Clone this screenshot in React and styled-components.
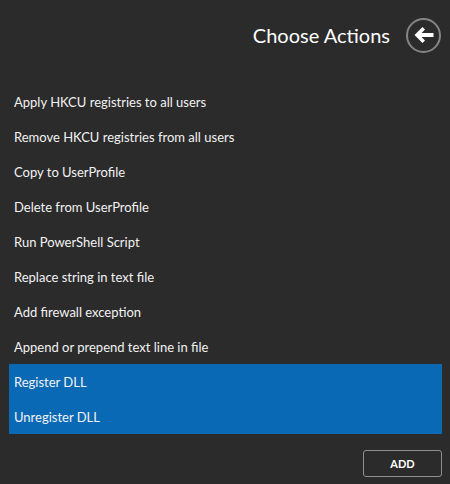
import React, { useState } from 'react'
import styled, { createGlobalStyle } from 'styled-components'

const GlobalStyle = createGlobalStyle`
    html, body {
        margin: 0;
        padding: 0;
        background: #2b2b2b;
    }
    body {
        font-family: "Lato", "Noto Sans", sans-serif;
        color: #f2f2f2;
    }
`

const Page = styled.div`
    width: 450px;
    height: 484px;
    display: flex;
    flex-direction: column;
    background: #2b2b2b;
    box-sizing: border-box;
    padding: 0 8px 0 9px;
`
const Header = styled.div`
    height: 70px;
    display: flex;
    align-items: center;
    justify-content: flex-end;
    gap: 16px;
    padding: 0 1px 0 0;
`
const Title = styled.h1`
    margin: 0;
    font-size: 20px;
    font-weight: 400;
    color: #ffffff;
`
const BackButton = styled.button`
    width: 35px;
    height: 35px;
    padding: 0;
    border: 2px solid #858585;
    border-radius: 50%;
    background: transparent;
    display: flex;
    align-items: center;
    justify-content: center;
    cursor: pointer;
`
const List = styled.ul`
    list-style: none;
    margin: 14px 0 0 0;
    padding: 0;
`
const Item = styled.li`
    height: 35px;
    display: flex;
    align-items: center;
    padding-left: 5px;
    font-size: 13px;
    color: #f2f2f2;
    background: ${p => (p.selected ? '#0a69b4' : 'transparent')};
`
const Footer = styled.div`
    display: flex;
    justify-content: flex-end;
    margin-top: 16px;
`
const AddButton = styled.button`
    width: 79px;
    height: 27px;
    border: 1px solid #8f8f8f;
    border-radius: 3px;
    background: transparent;
    color: #ffffff;
    font-family: "Lato", "Noto Sans", sans-serif;
    font-size: 11px;
    font-weight: 700;
    cursor: pointer;
`

const actions = [
    'Apply HKCU registries to all users',
    'Remove HKCU registries from all users',
    'Copy to UserProfile',
    'Delete from UserProfile',
    'Run PowerShell Script',
    'Replace string in text file',
    'Add firewall exception',
    'Append or prepend text line in file',
    'Register DLL',
    'Unregister DLL',
]

export default function App() {
    const [selected] = useState([8, 9])

    return (
        <Page>
            <GlobalStyle />
            <Header>
                <Title>Choose Actions</Title>
                <BackButton>
                    <svg width="22" height="20" viewBox="0 0 22 20">
                        <path d="M9.5 2 L1.5 10 L9.5 18 L12 15.5 L8.5 12 H20.5 V8 H8.5 L12 4.5 Z" fill="#ffffff" />
                    </svg>
                </BackButton>
            </Header>
            <List>
                {actions.map((a, i) => (
                    <Item key={a} selected={selected.includes(i)}>{a}</Item>
                ))}
            </List>
            <Footer>
                <AddButton>ADD</AddButton>
            </Footer>
        </Page>
    )
}
